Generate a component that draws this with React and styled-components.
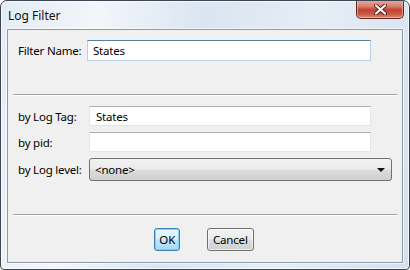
import React from 'react';
import styled, { createGlobalStyle } from 'styled-components';

const GlobalStyle = createGlobalStyle`
  html, body {
    margin: 0;
    padding: 0;
    background: #ffffff;
  }
  body {
    font-family: "Noto Sans", "Open Sans", sans-serif;
    font-size: 11.5px;
    letter-spacing: -0.2px;
    color: #000;
  }
`;

const Window = styled.div`
  box-sizing: border-box;
  width: 410px;
  height: 270px;
  display: flex;
  flex-direction: column;
  border: 1px solid #3c4652;
  border-radius: 7px 7px 4px 4px;
  background: linear-gradient(100deg, #e4ecf4 0%, #f3f6fa 22%, #dae5f1 45%, #e6edf5 70%, #d5e1ee 100%);
  box-shadow: inset 0 0 0 1px rgba(255, 255, 255, 0.7);
  overflow: hidden;
`;

const TitleBar = styled.div`
  height: 28px;
  display: flex;
  align-items: flex-start;
  justify-content: space-between;
  padding-left: 7px;
  padding-right: 5px;
`;

const Title = styled.span`
  margin-top: 6px;
  font-size: 12px;
  color: #111;
  letter-spacing: 0;
`;

const CloseButton = styled.div`
  box-sizing: border-box;
  width: 48px;
  height: 19px;
  margin-top: -1px;
  border: 1px solid #5b2a24;
  border-top: none;
  border-radius: 0 0 5px 5px;
  background: linear-gradient(180deg, #e9ab9d 0%, #d8806f 35%, #c4402f 55%, #cc5a48 80%, #e08a76 100%);
  box-shadow: inset 0 0 0 1px rgba(255, 220, 210, 0.45);
  display: flex;
  align-items: center;
  justify-content: center;
`;

const Panel = styled.div`
  flex: 1;
  margin: 0 6px 6px 6px;
  border: 1px solid #8d99a6;
  box-shadow: 0 0 0 1px rgba(255, 255, 255, 0.65);
  background: #f0f0f0;
  display: flex;
  flex-direction: column;
`;

const Row = styled.div`
  display: flex;
  align-items: center;
  height: ${p => p.h || 20}px;
  margin-top: ${p => p.top || 0}px;
  padding-left: 10px;
`;

const Label = styled.span`
  width: ${p => p.w}px;
  flex: none;
`;

const TextBox = styled.div`
  box-sizing: border-box;
  width: ${p => p.w}px;
  height: 100%;
  background: #fff;
  border: 1px solid ${p => (p.focus ? '#b7d0e6' : '#e1e6ec')};
  border-top-color: ${p => (p.focus ? '#5a7f9f' : '#abadb3')};
  display: flex;
  align-items: center;
  padding-left: ${p => p.pad || 6}px;
`;

const Separator = styled.div`
  height: 1px;
  margin: ${p => p.top}px 5px 0 5px;
  background: #a0a0a0;
  border-bottom: 1px solid #ffffff;
`;

const Combo = styled.div`
  box-sizing: border-box;
  width: 303px;
  height: 100%;
  border: 1px solid #707070;
  border-radius: 3px;
  background: linear-gradient(180deg, #f2f2f2 0%, #ebebeb 48%, #dddddd 52%, #cfcfcf 100%);
  display: flex;
  align-items: center;
  justify-content: space-between;
  padding: 0 6px 0 5px;
`;

const Arrow = styled.span`
  width: 0;
  height: 0;
  border-left: 4px solid transparent;
  border-right: 4px solid transparent;
  border-top: 4px solid #111;
`;

const ButtonBar = styled.div`
  display: flex;
  justify-content: center;
  gap: 27px;
  margin-top: 12px;
  padding-right: 2px;
`;

const Button = styled.div`
  box-sizing: border-box;
  height: 23px;
  padding: 0 ${p => (p.primary ? 4 : 5)}px;
  border: 1px solid ${p => (p.primary ? '#3c7fb1' : '#707070')};
  border-radius: 3px;
  background: ${p =>
    p.primary
      ? 'linear-gradient(180deg, #eaf6fd 0%, #d9f0fc 48%, #bee6fd 52%, #a7d9f5 100%)'
      : 'linear-gradient(180deg, #f2f2f2 0%, #ebebeb 48%, #dddddd 52%, #cfcfcf 100%)'};
  box-shadow: inset 0 0 0 1px ${p => (p.primary ? 'rgba(120, 200, 240, 0.8)' : 'rgba(255, 255, 255, 0.6)')};
  display: flex;
  align-items: center;
  justify-content: center;
`;

export default function App() {
  return (
    <>
      <GlobalStyle />
      <Window>
        <TitleBar>
          <Title>Log Filter</Title>
          <CloseButton>
            <svg width="13" height="11" viewBox="0 0 13 11">
              <path d="M2 1.5 L11 9.5 M11 1.5 L2 9.5" stroke="#5a1e16" strokeWidth="4" strokeLinecap="round" />
              <path d="M2 1.5 L11 9.5 M11 1.5 L2 9.5" stroke="#ffffff" strokeWidth="2.2" strokeLinecap="round" />
            </svg>
          </CloseButton>
        </TitleBar>
        <Panel>
          <Row h={21} top={10}>
            <Label w={69}>Filter Name:</Label>
            <TextBox w={284} pad={5} focus>States</TextBox>
          </Row>
          <Separator top={33} />
          <Row h={20} top={10}>
            <Label w={71}>by Log Tag:</Label>
            <TextBox w={282}>States</TextBox>
          </Row>
          <Row h={20} top={6}>
            <Label w={71}>by pid:</Label>
            <TextBox w={282} />
          </Row>
          <Row h={23} top={6}>
            <Label w={71}>by Log level:</Label>
            <Combo>
              <span>&lt;none&gt;</span>
              <Arrow />
            </Combo>
          </Row>
          <Separator top={33} />
          <ButtonBar>
            <Button primary>OK</Button>
            <Button>Cancel</Button>
          </ButtonBar>
        </Panel>
      </Window>
    </>
  );
}
